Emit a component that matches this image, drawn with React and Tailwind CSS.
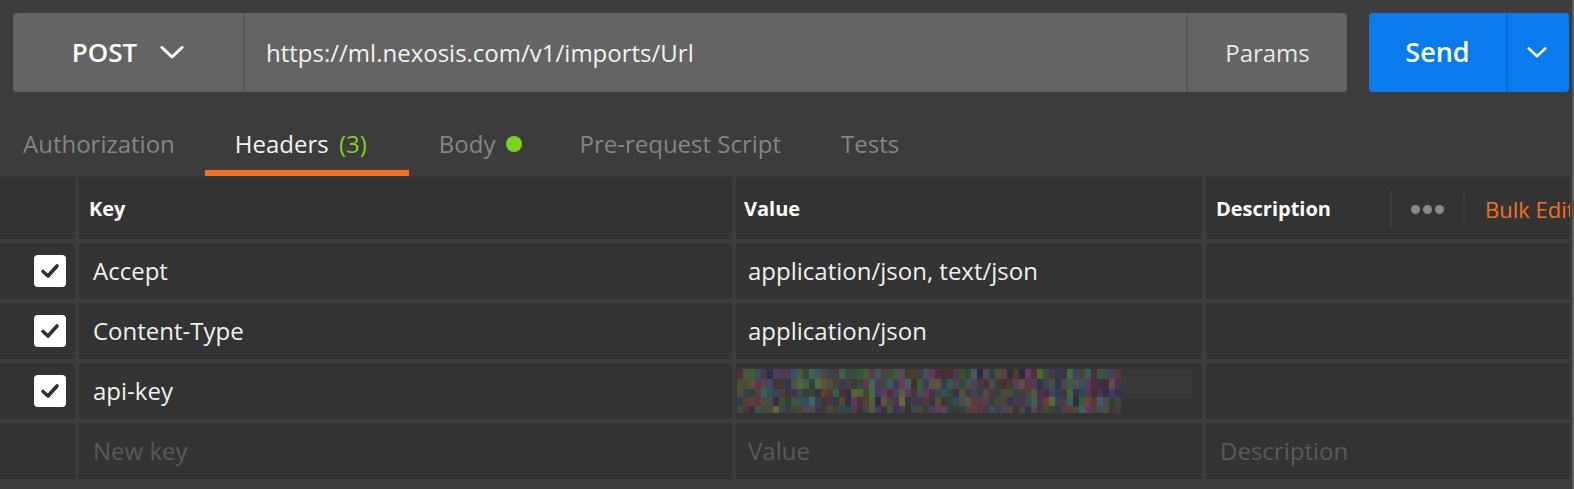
import React from 'react'

const rows = [
  { key: 'Accept', value: 'application/json, text/json' },
  { key: 'Content-Type', value: 'application/json' },
  { key: 'api-key', value: null },
]

// redacted value: a small mosaic, seeded so every render is the same
function Mosaic() {
  let seed = 7
  const rnd = () => {
    seed = (seed * 16807) % 2147483647
    return seed / 2147483647
  }
  const cells = []
  const rowH = [10, 10, 8, 9, 7]
  let y = 0
  rowH.forEach((h, r) => {
    for (let c = 0; c < 64; c++) {
      const hue = Math.floor(rnd() * 360)
      const sat = 10 + Math.floor(rnd() * 22)
      const light = 22 + Math.floor(rnd() * 11)
      cells.push(<rect key={r + '-' + c} x={c * 6} y={y} width="6" height={h} fill={`hsl(${hue} ${sat}% ${light}%)`} />)
    }
    y += h
  })
  return (
    <svg width="384" height="44" viewBox="0 0 384 44" className="block">
      {cells}
    </svg>
  )
}

function Check() {
  return (
    <div className="w-[32px] h-[32px] rounded-[4px] bg-white flex items-center justify-center">
      <svg width="20" height="16" viewBox="0 0 20 16">
        <path d="M3 8.5 L8 13 L17 3" fill="none" stroke="#303030" strokeWidth="3.6" strokeLinecap="round" strokeLinejoin="round" />
      </svg>
    </div>
  )
}

function Chevron({ w = 24, h = 13 }) {
  return (
    <svg width={w} height={h} viewBox="0 0 24 13">
      <path d="M2 1.5 L12 11 L22 1.5" fill="none" stroke="#fff" strokeWidth="3" strokeLinecap="round" strokeLinejoin="round" />
    </svg>
  )
}

export default function App() {
  const tab = 'text-[24px] leading-[33px] px-[30px] pb-[10px] border-b-[6px]'
  const cell = 'bg-[#333333] flex items-center'
  return (
    <div className="w-[1574px] h-[489px] bg-[#3c3c3c] overflow-hidden text-[#f0f0f0] border-r-2 border-[#5a5a5a]" style={{ fontFamily: '"Open Sans", "Noto Sans", sans-serif' }}>
      {/* request bar */}
      <div className="flex pt-[13px] pl-[13px] gap-[22px]">
        <div className="w-[1334px] h-[79px] bg-[#646464] rounded-[4px] flex">
          <div className="w-[232px] flex items-center justify-center gap-[23px] border-r-2 border-[#575757]">
            <span className="text-[26px] font-semibold text-white">POST</span>
            <Chevron />
          </div>
          <div className="flex-1 flex items-center pl-[21px] text-[24px] text-[#f2f2f2] border-r-2 border-[#575757]">
            https://ml.nexosis.com/v1/imports/Url
          </div>
          <div className="w-[159px] flex items-center justify-center text-[24px] text-[#e8e8e8]">Params</div>
        </div>
        <div className="w-[200px] h-[79px] bg-[#097bed] rounded-[4px] flex">
          <div className="w-[139px] flex items-center justify-center text-[27px] font-semibold text-white border-r-2 border-[#0a6bcc]">Send</div>
          <div className="flex-1 flex items-center justify-center pr-[3px]">
            <Chevron w={20} h={11} />
          </div>
        </div>
      </div>

      {/* tabs */}
      <div className="h-[84px] flex items-end -ml-[7px]">
        <div className={tab + ' text-[#858585] border-transparent'}>Authorization</div>
        <div className={tab + ' w-[204px] text-[#f4f4f4] border-[#f47023]'}>
          Headers <span className="ml-[4px] text-[#7ed321]">(3)</span>
        </div>
        <div className={tab + ' !pr-[27px] text-[#858585] border-transparent flex items-center gap-[11px]'}>
          Body <span className="w-[16px] h-[16px] rounded-full bg-[#7ed321]" />
        </div>
        <div className={tab + ' text-[#858585] border-transparent'}>Pre-request Script</div>
        <div className={tab + ' text-[#858585] border-transparent'}>Tests</div>
      </div>

      {/* headers table */}
      <div className="border-t border-[#3a3a3a] grid grid-cols-[75px_653px_466px_1fr] gap-[4px] bg-[#3d3d3d] w-[1570px]">
        <div className={cell + ' h-[62px]'} />
        <div className={cell + ' pl-[10px] pt-[2px] text-[20px] font-bold text-white'}>Key</div>
        <div className={cell + ' pl-[8px] pt-[2px] text-[20px] font-bold text-white'}>Value</div>
        <div className={cell + ' pl-[10px] pt-[2px] text-[20px] font-bold text-white overflow-hidden whitespace-nowrap'}>
          <span className="w-[174px] shrink-0">Description</span>
          <span className="w-[2px] h-[38px] shrink-0 bg-[#3d3d3d]" />
          <span className="flex shrink-0 gap-[3px] px-[19px]">
            <span className="w-[9px] h-[9px] rounded-full bg-[#888]" />
            <span className="w-[9px] h-[9px] rounded-full bg-[#888]" />
            <span className="w-[9px] h-[9px] rounded-full bg-[#888]" />
          </span>
          <span className="w-[2px] h-[32px] shrink-0 bg-[#3d3d3d]" />
          <span className="pl-[20px] shrink-0 text-[22px] font-normal text-[#f47023]">Bulk Edit</span>
        </div>

        {rows.map(r => (
          <React.Fragment key={r.key}>
            <div className={cell + ' h-[56px] pl-[34px]'}><Check /></div>
            <div className={cell + ' pl-[14px] text-[24px]'}>{r.key}</div>
            <div className={cell + ' pl-[12px] text-[24px]'}>
              {r.value ?? (
                <div className="-ml-[11px] flex items-start">
                  <Mosaic />
                  <div className="w-[72px] h-[29px] bg-[#383838]" />
                </div>
              )}
            </div>
            <div className={cell} />
          </React.Fragment>
        ))}

        <div className={cell + ' h-[56px]'} />
        <div className={cell + ' pl-[14px] text-[24px] text-[#5a5a5a]'}>New key</div>
        <div className={cell + ' pl-[12px] text-[24px] text-[#5a5a5a]'}>Value</div>
        <div className={cell + ' pl-[14px] text-[24px] text-[#5a5a5a]'}>Description</div>
      </div>
    </div>
  )
}
